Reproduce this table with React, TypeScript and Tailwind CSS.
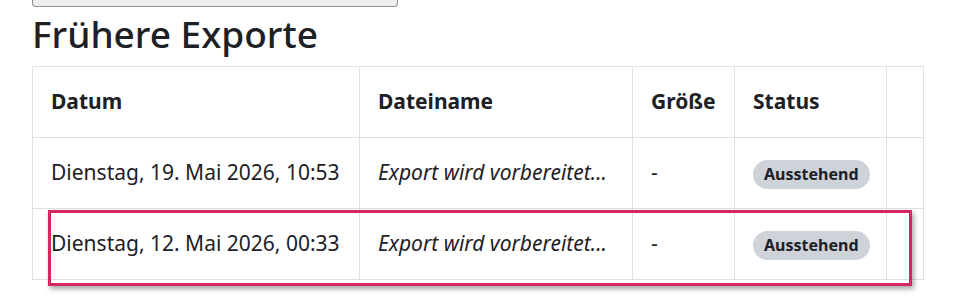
export default function App() {
  const rows = [
    { date: "Dienstag, 19. Mai 2026, 10:53" },
    { date: "Dienstag, 12. Mai 2026, 00:33" },
  ];

  return (
    <div className="relative w-[961px] h-[303px] overflow-hidden bg-white text-[#1d2125] font-['Noto_Sans',sans-serif]">
      <div className="ml-[32px] w-[366px] h-[7px] border border-t-0 border-[#8f8f8f] bg-[#efefef] rounded-b-[4px]" />

      <h2 className="ml-[32px] mt-[3px] text-[37px] leading-[48px] font-medium">
        Frühere Exporte
      </h2>

      <table className="ml-[32px] mt-[8px] w-[891px] border-collapse table-fixed text-[21px]">
        <colgroup>
          <col className="w-[327px]" />
          <col className="w-[273px]" />
          <col className="w-[102px]" />
          <col className="w-[152px]" />
          <col className="w-[37px]" />
        </colgroup>
        <thead>
          <tr className="h-[71px]">
            <th className="border border-[#dee2e6] px-[18px] text-left font-bold">Datum</th>
            <th className="border border-[#dee2e6] px-[18px] text-left font-bold">Dateiname</th>
            <th className="border border-[#dee2e6] px-[18px] text-left font-bold">Größe</th>
            <th className="border border-[#dee2e6] px-[18px] text-left font-bold">Status</th>
            <th className="border border-[#dee2e6]" />
          </tr>
        </thead>
        <tbody>
          {rows.map((row) => (
            <tr key={row.date} className="h-[71px]">
              <td className="border border-[#dee2e6] px-[18px] whitespace-nowrap">{row.date}</td>
              <td className="border border-[#dee2e6] px-[18px] italic whitespace-nowrap">
                Export wird vorbereitet...
              </td>
              <td className="border border-[#dee2e6] px-[18px]">-</td>
              <td className="border border-[#dee2e6] px-[18px]">
                <span className="inline-flex items-center h-[29px] px-[11px] rounded-full bg-[#ced2d9] text-[16px] font-bold">
                  Ausstehend
                </span>
              </td>
              <td className="border border-[#dee2e6]" />
            </tr>
          ))}
        </tbody>
      </table>

      <div className="absolute left-[48px] top-[210px] w-[864px] h-[76px] border-[3px] border-[#d6285e] shadow-[2px_3px_5px_rgba(0,0,0,0.35)]" />
    </div>
  );
}
